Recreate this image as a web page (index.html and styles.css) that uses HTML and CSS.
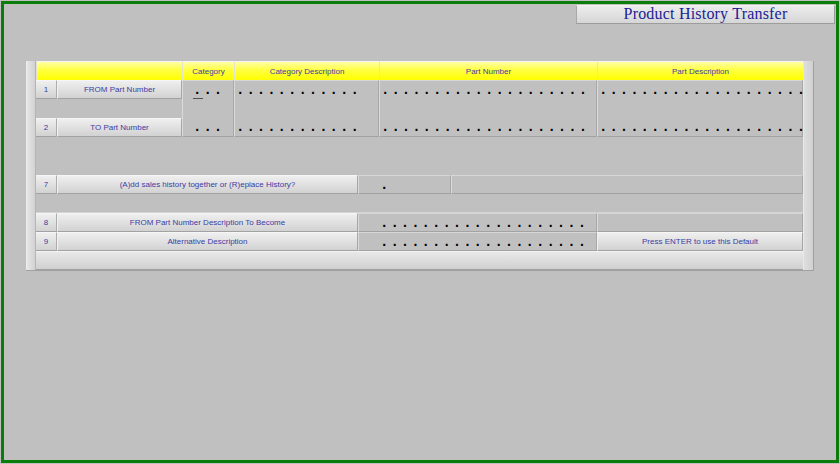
FILE: index.html
```html
<!DOCTYPE html>
<html lang="en">
<head>
  <meta charset="UTF-8" />
  <title>Product History Transfer</title>
  <link rel="stylesheet" href="styles.css">
</head>
<body>
  <div class="window">
    <div class="titlebar">
      <div class="title">Product History Transfer</div>
    </div>

    <div class="panel">
      <div class="gutter gutter-left"></div>

      <div class="grid">
        <!-- header -->
        <div class="hd span-2"></div>
        <div class="hd">Category</div>
        <div class="hd span-2">Category Description</div>
        <div class="hd span-2">Part Number</div>
        <div class="hd">Part Description</div>

        <!-- fields 1 and 2 -->
        <div class="num">1</div>
        <div class="lbl">FROM Part Number</div>
        <div class="fld rows-3 pad-cat">
          <div class="dots"><span class="caret">.</span>..</div>
          <div class="dots">...</div>
        </div>
        <div class="fld rows-3 span-2 pad-1">
          <div class="dots">............</div>
          <div class="dots">............</div>
        </div>
        <div class="fld rows-3 span-2 pad-1">
          <div class="dots">....................</div>
          <div class="dots">....................</div>
        </div>
        <div class="fld rows-3 pad-1">
          <div class="dots">....................</div>
          <div class="dots">....................</div>
        </div>
        <div class="blank span-2"></div>
        <div class="num">2</div>
        <div class="lbl">TO Part Number</div>

        <div class="blank span-8 rows-2"></div>

        <!-- field 7 -->
        <div class="num">7</div>
        <div class="lbl span-3">(A)dd sales history together or (R)eplace History?</div>
        <div class="fld span-2 pad-val"><div class="dots">.</div></div>
        <div class="fld span-2"></div>

        <div class="blank span-8 gap-row"></div>

        <!-- fields 8 and 9 -->
        <div class="num">8</div>
        <div class="lbl span-3">FROM Part Number Description To Become</div>
        <div class="fld span-3 pad-val"><div class="dots">....................</div></div>
        <div class="fld"></div>

        <div class="num">9</div>
        <div class="lbl span-3">Alternative Description</div>
        <div class="fld span-3 pad-val"><div class="dots">....................</div></div>
        <div class="lbl hint">Press ENTER to use this Default</div>

        <div class="bar span-8"></div>
      </div>

      <div class="gutter gutter-right"></div>
    </div>
  </div>
</body>
</html>
```

FILE: styles.css
```css
body {
  margin: 0;
  background: #c0c0c0;
  font-family: "Liberation Sans", Arial, sans-serif;
}
.window {
  margin: 1px;
  width: 838px;
  height: 462px;
  box-sizing: border-box;
  border: 3px solid #0b7d0b;
  background: #c0c0c0;
}
.titlebar {
  display: flex;
  justify-content: flex-end;
  padding: 1px 1px 0 0;
}
.title {
  width: 259px;
  height: 19px;
  box-sizing: border-box;
  border: 1px solid;
  border-color: #f2f2f2 #9c9c9c #9c9c9c #a8a8a8;
  background: linear-gradient(#ececec, #d6d6d6);
  color: #1c1c96;
  font-family: "Liberation Serif", "Times New Roman", serif;
  font-size: 16px;
  letter-spacing: 0.2px;
  line-height: 16px;
  text-align: center;
}
.panel {
  display: flex;
  margin: 37px 0 0 22px;
  width: 788px;
  border-bottom: 1px solid #a0a0a0;
}
.gutter {
  box-sizing: border-box;
}
.gutter-left {
  width: 10px;
  background: linear-gradient(to right, #e6e6e6, #d2d2d2);
  border-left: 1px solid #ececec;
  border-right: 1px solid #b4b4b4;
}
.gutter-right {
  width: 11px;
  background: linear-gradient(to right, #dedede, #d0d0d0);
  border-left: 1px solid #e8e8e8;
  border-right: 1px solid #a0a0a0;
}
.grid {
  display: grid;
  grid-template-columns: 21px 125px 52px 124px 21px 72px 146px 206px;
  grid-template-rows: repeat(11, 19px);
  width: 767px;
  font-size: 8px;
  color: #3c3ca4;
}
.grid > div {
  box-sizing: border-box;
  min-width: 0;
}
.span-2 { grid-column: span 2; }
.span-3 { grid-column: span 3; }
.span-8 { grid-column: span 8; }
.rows-2 { grid-row: span 2; }
.rows-3 { grid-row: span 3; }

.hd {
  display: flex;
  align-items: center;
  justify-content: center;
  background: linear-gradient(#ffffa6, #ffff40 45%, #ffff00);
  border-left: 1px solid #e2e2d0;
  border-top: 1px solid #f4f4f4;
}
.num, .lbl {
  display: flex;
  align-items: center;
  justify-content: center;
  background: linear-gradient(#efefef, #d2d2d2);
  border-top: 1px solid #f6f6f6;
  border-bottom: 1px solid #a2a2a2;
}
.num {
  border-right: 1px solid #acacac;
}
.lbl {
  border-left: 1px solid #f2f2f2;
  border-right: 1px solid #a6a6a6;
}
.fld {
  display: flex;
  flex-direction: column;
  justify-content: space-between;
  background: #c0c0c0;
  border-left: 1px solid #dadada;
  border-top: 1px solid #d6d6d6;
  border-right: 1px solid #a8a8a8;
  border-bottom: 1px solid #a2a2a2;
}
.blank {
  background: #c0c0c0;
}
.gap-row {
  border-bottom: 1px solid #d4d4d4;
}
.bar {
  background: linear-gradient(#e8e8e8, #d0d0d0);
  border-top: 1px solid #f2f2f2;
  border-bottom: 1px solid #a0a0a0;
}
.pad-1 { padding-left: 1px; }
.pad-cat { padding-left: 10px; }
.pad-val { padding-left: 21px; }

.dots {
  height: 18px;
  font-family: "Liberation Mono", "Courier New", monospace;
  font-weight: bold;
  font-size: 14px;
  letter-spacing: 2px;
  line-height: 18px;
  color: #000;
  white-space: nowrap;
}
.caret {
  border-bottom: 1px solid #505050;
}
```
